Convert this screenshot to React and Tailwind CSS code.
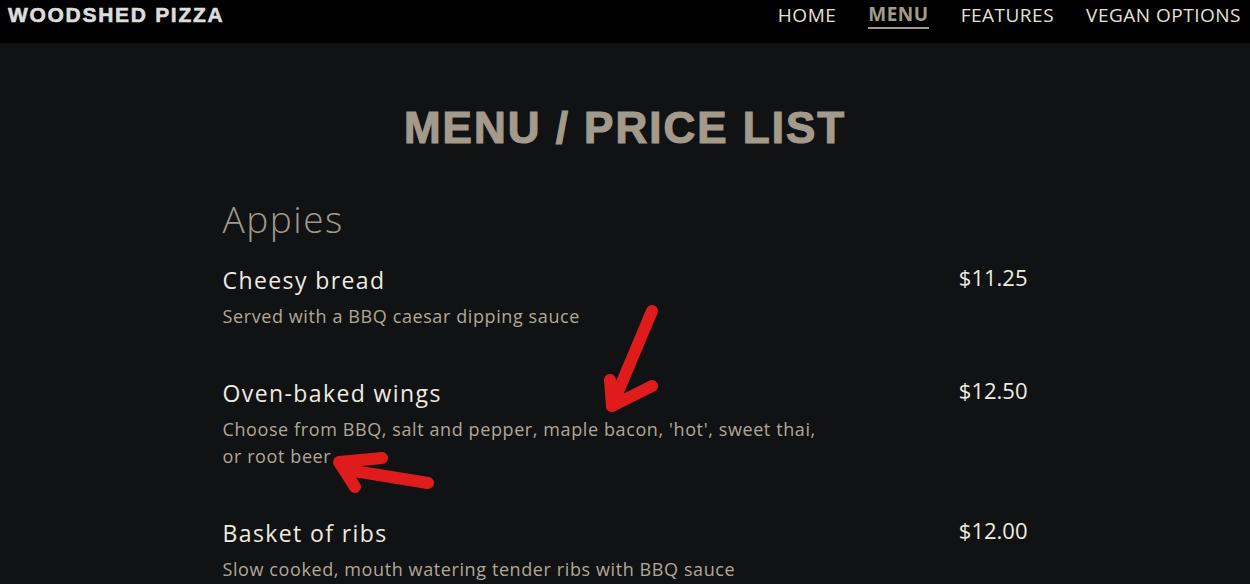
import React from "react";

const items = [
  { name: "Cheesy bread", price: "$11.25", desc: "Served with a BBQ caesar dipping sauce" },
  { name: "Oven-baked wings", price: "$12.50", desc: "Choose from BBQ, salt and pepper, maple bacon, 'hot', sweet thai, or root beer" },
  { name: "Basket of ribs", price: "$12.00", desc: "Slow cooked, mouth watering tender ribs with BBQ sauce" },
];

export default function App() {
  return (
    <div className="relative min-h-[584px] w-full overflow-hidden bg-[#111214] font-['Open_Sans',sans-serif]">
      <header className="flex h-[43px] items-start justify-between bg-black pl-2 pr-[9px] pt-[2px]">
        <div className="font-['Liberation_Sans',sans-serif] text-[21px] font-bold leading-[26px] tracking-[1.7px] text-[#dcdcdc] [-webkit-text-stroke:0.6px_#dcdcdc]">
          WOODSHED PIZZA
        </div>
        <nav className="flex items-start gap-8 text-[19px] tracking-[0.5px] text-[#e6e1d8]">
          <a className="leading-[26px]">HOME</a>
          <a className="border-b-2 border-[#a39a8c] font-bold leading-[25px] text-[#a39a8c]">MENU</a>
          <a className="leading-[26px]">FEATURES</a>
          <a className="leading-[26px]">VEGAN OPTIONS</a>
        </nav>
      </header>

      <main className="mx-auto w-[805px]">
        <h1 className="mt-[63px] text-center font-['Liberation_Sans',sans-serif] text-[44px] font-bold leading-none tracking-[2px] text-[#a39a8c] [-webkit-text-stroke:1.2px_#a39a8c]">
          MENU / PRICE LIST
        </h1>
        <h2 className="mt-[50px] text-[37px] font-light leading-none tracking-[1.5px] text-[#a0998c]">Appies</h2>
        <div className="mt-[30px] flex flex-col gap-[50px]">
          {items.map((it) => (
            <div key={it.name} className="flex items-start justify-between">
              <div className="flex flex-col gap-[10px]">
                <div className="text-[23px] leading-[26px] tracking-[1.4px] text-[#f0ebe0]">{it.name}</div>
                <div className="max-w-[610px] text-[18px] leading-[27px] tracking-[0.6px] text-[#b0a898]">{it.desc}</div>
              </div>
              <div className="-mt-[3px] text-[22px] leading-[26px] text-[#f0ebe0]">{it.price}</div>
            </div>
          ))}
        </div>
      </main>

      <svg className="pointer-events-none absolute left-0 top-0" width="1250" height="584" viewBox="0 0 1250 584">
        <g stroke="#e01b1b" strokeWidth="12" strokeLinecap="round" strokeLinejoin="round" fill="none">
          <path d="M652 311 L612 406" />
          <path d="M610 380 L612 406 L652 386" />
          <path d="M428 483 L348 470" />
          <path d="M382 458 L339 462 L355 487" />
        </g>
      </svg>
    </div>
  );
}
